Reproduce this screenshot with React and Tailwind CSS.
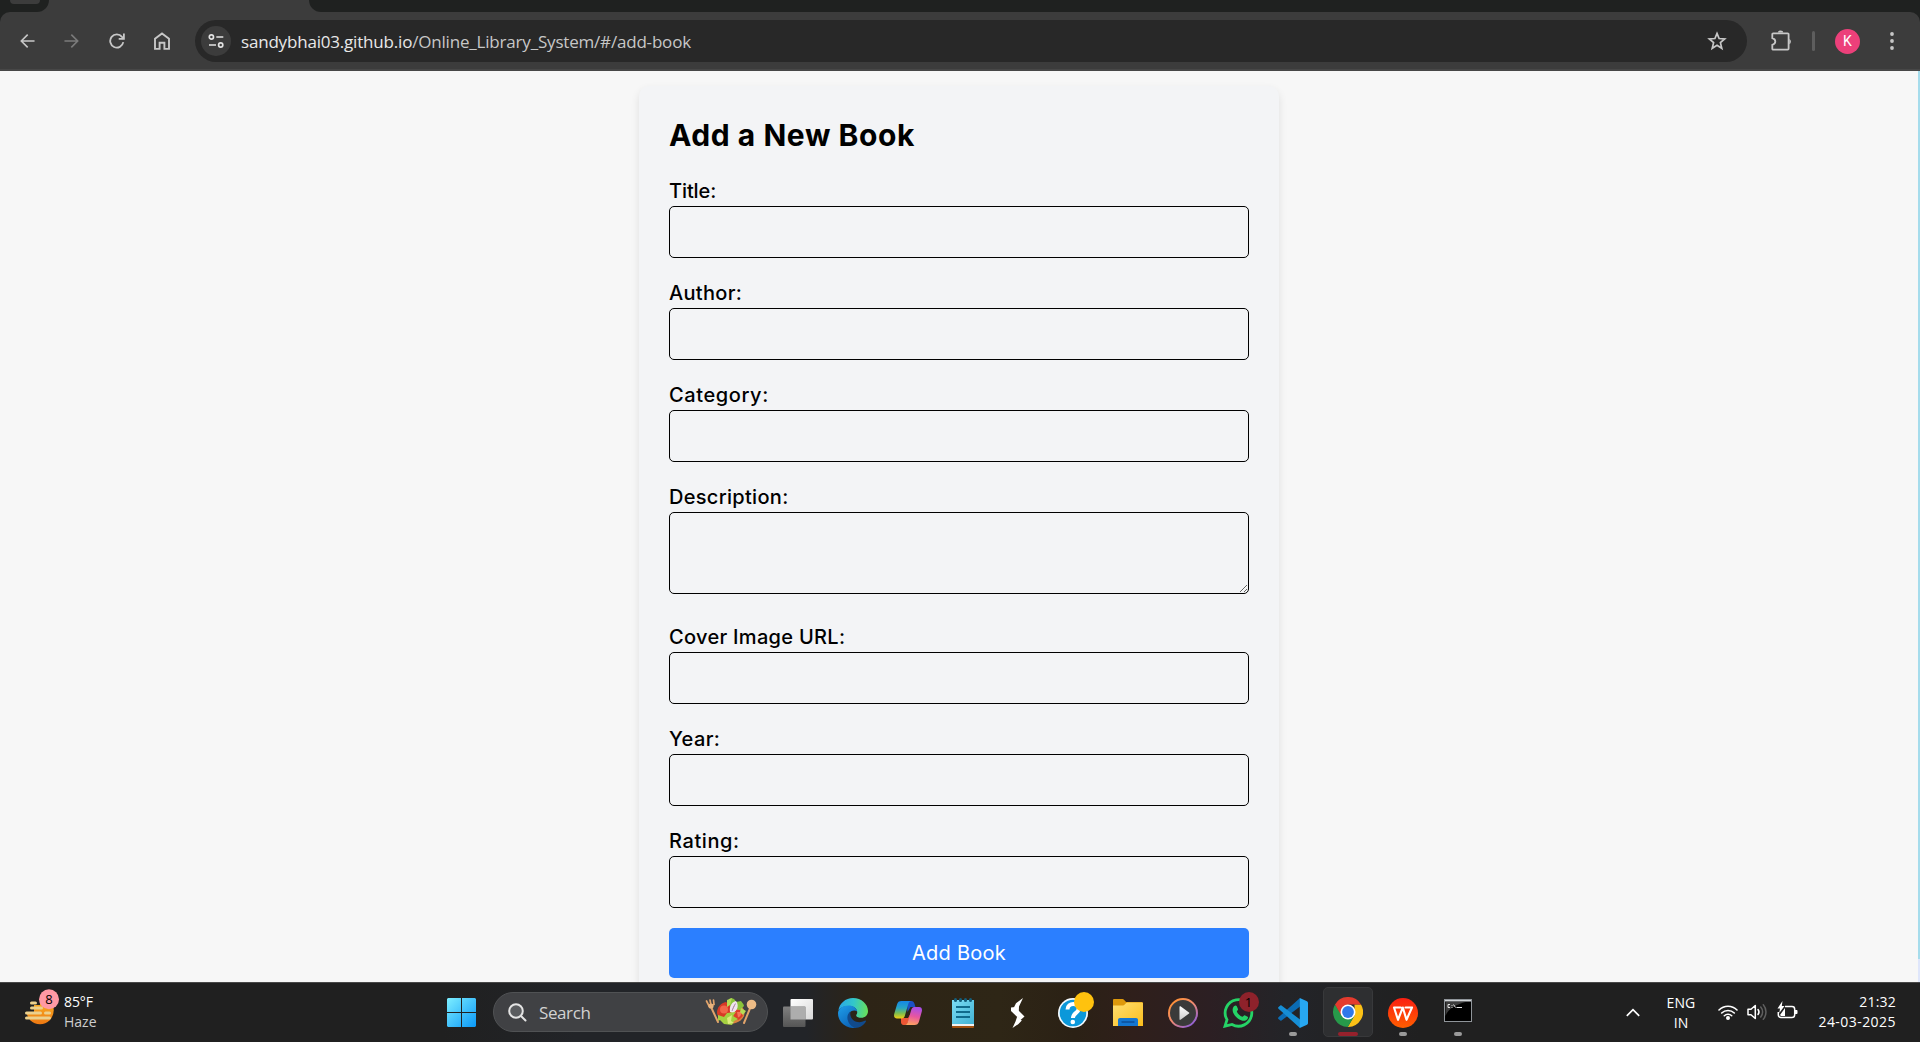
import React from "react";

const ui = "font-['Open_Sans','Noto_Sans',sans-serif]";

function BackIcon({ className }) {
  return (
    <svg viewBox="0 0 16 16" className={className} fill="none" stroke="currentColor" strokeWidth="1.7">
      <path d="M15.5 8H1.6M8.2 1.2 1.4 8l6.8 6.8" />
    </svg>
  );
}

function ReloadIcon() {
  return (
    <svg viewBox="0 0 16 16" className="ml-px h-4 w-4" fill="none" stroke="currentColor" strokeWidth="1.8">
      <path d="M14.300 9.200A6.600 6.600 0 1 1 13 3.900L14.600 5.600" />
      <path d="M14.900.6v5.200H9.700" />
    </svg>
  );
}

function HomeIcon() {
  return (
    <svg viewBox="0 0 16 18" className="h-[18px] w-4" fill="none" stroke="currentColor" strokeWidth="1.9">
      <path d="M1 16.900V6.800L8 1.400l7 5.400v10.100h-4.600v-6.200H5.600v6.200Z" />
    </svg>
  );
}

function TuneIcon() {
  return (
    <svg viewBox="0 0 16 14" className="h-[14px] w-4" fill="none" stroke="#e3e3e3" strokeWidth="1.7">
      <circle cx="3.400" cy="3" r="2.100" />
      <path d="M8.300 3h7M1 11h7" />
      <circle cx="12.700" cy="11" r="2.100" />
    </svg>
  );
}

function StarIcon() {
  return (
    <svg viewBox="0 0 20 20" className="h-5 w-5" fill="none" stroke="currentColor" strokeWidth="1.7">
      <path d="m10 2.400 2.100 5.100 5.600.5-4.300 3.600 1.400 5.700-4.800-3.100-4.800 3.100 1.400-5.700L2.300 8l5.600-.5Z" />
    </svg>
  );
}

function PuzzleIcon() {
  return (
    <svg viewBox="0 0 22 21" className="h-[21px] w-[22px]">
      <path
        d="M3.200 3.300h14.500a.9.9 0 0 1 .9.9v14.500a.9.9 0 0 1-.9.9H3.200a.9.9 0 0 1-.9-.9v-3.900c2-.6 3-1.700 3-3.300S4.300 8.700 2.300 8.100V4.200a.9.9 0 0 1 .9-.9Z"
        fill="none"
        stroke="currentColor"
        strokeWidth="1.8"
      />
      <path d="M7.800 2.600a2.700 2.200 0 0 1 5.400 0ZM19.300 9v5.200a2.200 2.700 0 0 0 0-5.200Z" fill="currentColor" />
    </svg>
  );
}

function BrowserBar() {
  return (
    <header className="shrink-0 bg-[#1f2120]">
      <div className="flex h-3 bg-[#3c3c3c]">
        <div className="flex h-3 w-[49px] justify-center rounded-br-xl bg-[#1f2120]">
          <div className="h-1 w-[30px] rounded-b-[10px] bg-[#3c3c3c]" />
        </div>
        <div className="w-[260px]" />
        <div className="h-3 flex-1 rounded-bl-xl bg-[#1f2120]" />
      </div>
      <div className="flex h-[59px] items-start rounded-t-[10px] border-b-2 border-[#474747] bg-[#3c3c3c] pt-2 text-[#c7c7c7]">
        <div className="flex h-[42px] w-full items-center">
          <div className="ml-5 flex w-[150px] items-center justify-between">
            <BackIcon className="h-4 w-[15px]" />
            <BackIcon className="h-4 w-[15px] rotate-180 text-[#7b7b7b]" />
            <ReloadIcon />
            <HomeIcon />
          </div>
          <div className="ml-[25px] flex h-[42px] w-[1552px] items-center rounded-full bg-[#282828] pr-5 pl-1.5">
            <div className="flex h-[30px] w-[30px] items-center justify-center rounded-full bg-[#3c3c3c]">
              <TuneIcon />
            </div>
            <div className={`mt-0.5 ml-[10px] flex-1 text-[17px] tracking-[-0.19px] whitespace-nowrap ${ui}`}>
              <span className="text-[#e8e8e8]">sandybhai03.github.io</span>
              <span>/Online_Library_System/#/add-book</span>
            </div>
            <StarIcon />
          </div>
          <div className="mb-px ml-[23px]">
            <PuzzleIcon />
          </div>
          <div className="ml-5 h-5 w-[3px] rounded-full bg-[#5e5e5e]" />
          <div className="ml-5 flex h-[25px] w-[25px] items-center justify-center rounded-full bg-[#ec407a] font-[Roboto,sans-serif] text-[14px] text-white">
            K
          </div>
          <svg viewBox="0 0 4 18" className="ml-[30px] h-[18px] w-1" fill="currentColor">
            <circle cx="2" cy="2" r="1.9" />
            <circle cx="2" cy="9" r="1.9" />
            <circle cx="2" cy="16" r="1.9" />
          </svg>
        </div>
      </div>
    </header>
  );
}

function Field({ label, tracking, textarea }) {
  return (
    <label className="mb-5 flow-root">
      <span className={`block h-[30px] text-[20px] leading-[30px] font-medium ${tracking}`}>{label}</span>
      {textarea ? (
        <textarea className="mb-2 block h-[82px] w-full resize-y rounded-[5px] border border-black bg-transparent p-2.5" />
      ) : (
        <input className="block h-[52px] w-full rounded-[5px] border border-black bg-transparent p-2.5" />
      )}
    </label>
  );
}

function AddBookPage() {
  return (
    <main className="flex min-h-0 flex-1 overflow-hidden bg-[#f7f7f7]">
      <div className="flex flex-1 justify-center pt-[15px]">
        <form className="h-[940px] w-[640px] rounded-[10px] bg-[#f3f4f6] px-[30px] pt-[30px] font-[Inter,sans-serif] text-black shadow-[0_4px_8px_rgba(0,0,0,0.1)]">
          <h2 className="mb-[15px] h-[45px] text-[30px] leading-[38px] font-bold tracking-[0.55px] whitespace-nowrap">
            Add a New Book
          </h2>
          <Field label="Title:" tracking="tracking-[-0.1px]" />
          <Field label="Author:" tracking="tracking-[0.3px]" />
          <Field label="Category:" tracking="tracking-[0.6px]" />
          <Field label="Description:" tracking="tracking-[0.3px]" textarea />
          <Field label="Cover Image URL:" tracking="tracking-[0.3px]" />
          <Field label="Year:" tracking="tracking-[0.4px]" />
          <Field label="Rating:" tracking="tracking-[0.6px]" />
          <button
            type="button"
            className="block h-[50px] w-full rounded-[5px] bg-[#2b7fff] text-[20px] tracking-[0.25px] text-white"
          >
            Add Book
          </button>
        </form>
      </div>
      <div className="flex w-0.5 flex-col">
        <div className="h-[888px] bg-[#a6dcec]" />
        <div className="flex-1 bg-[#dfe6fb]" />
      </div>
    </main>
  );
}

function HazeIcon() {
  return (
    <svg viewBox="0 0 34 36" className="h-9 w-[34px]">
      <defs>
        <linearGradient id="sun" x1="0" y1="0" x2="0" y2="1">
          <stop offset="0" stopColor="#fbb924" />
          <stop offset="1" stopColor="#ee7812" />
        </linearGradient>
      </defs>
      <circle cx="15" cy="21.500" r="13.700" fill="url(#sun)" />
      <path d="M0 0h15v16H9v8H0Z" fill="#202020" />
      <g stroke="#ecd08c" strokeWidth="3" strokeLinecap="round">
        <path d="M6.500 14h4M6.500 19h10M1.500 24h14M20.500 24h4M1.500 29h23" />
      </g>
      <circle cx="24" cy="10.200" r="10" fill="#ff99a4" />
    </svg>
  );
}

function WindowsIcon() {
  return (
    <svg viewBox="0 0 29 29" className="h-[29px] w-[29px]">
      <defs>
        <linearGradient id="win" x1="0" y1="0" x2="1" y2="1">
          <stop offset="0" stopColor="#7deeff" />
          <stop offset="1" stopColor="#0a98f8" />
        </linearGradient>
      </defs>
      <path d="M1 0h13v14H0V1ZM15 0h13l1 1v13H15ZM0 15h14v14H1l-1-1ZM15 15h14v13l-1 1H15Z" fill="url(#win)" />
    </svg>
  );
}

function SaladIcon() {
  return (
    <svg viewBox="0 0 52 28" className="h-7 w-[52px]">
      <g stroke="#e0a36b" strokeLinecap="round" fill="none">
        <path d="m6 9 7 15M46 8l-7 17" strokeWidth="2" />
        <path d="m1.500 3 2.500 5 5-1.500L8.500 2M5 2l1 5" strokeWidth="1.700" />
      </g>
      <circle cx="6" cy="8" r="2.600" fill="#e8b27c" />
      <circle cx="46.500" cy="6.500" r="4.800" fill="#edbc86" />
      <ellipse cx="26" cy="15" rx="13.500" ry="10.500" fill="#d9823f" />
      <path d="M24 1c3-2 6 0 7 3l5-1c1 2 3 3 3 5l-4 4-11-3Z" fill="#8ac43a" />
      <path d="M12 15c0-6 4-10 9-11l4 3 1 9-8 5c-3-1-5-3-6-6Z" fill="#d63a26" />
      <circle cx="19" cy="11.500" r="4" fill="#f2674a" />
      <path d="M30 12h9c0 5-2 8-6 10l-5-3Z" fill="#dd3f2a" />
      <path d="M32 14h4.500c0 3-1.500 4.500-3.500 5.500Z" fill="#f47559" />
      <path d="M25 14c-1-6 2-10 6-11 3 4 2 9-3 12Z" fill="#efe4ee" />
      <path d="M27 13c1-3 2-5 3.500-7.500" stroke="#b487ae" strokeWidth="1" />
      <path d="m13 17 6 2 3-4 9-1-3 4 5 3-4 2-2 4-8-1-4-4-2 1Z" fill="#a5d040" />
      <path d="m22 20 5-3-1 6 3 2-6 1Z" fill="#dcea7c" />
      <path d="m36 10 5 3-3 4-3-3ZM22 2l5-2-2 7-3 2Z" fill="#b6dc55" />
    </svg>
  );
}

function TaskViewIcon() {
  return (
    <svg viewBox="0 0 30 30" className="h-[30px] w-[30px]">
      <defs>
        <linearGradient id="tvA" x1="0" y1="0" x2="1" y2="1">
          <stop offset="0" stopColor="#fff" />
          <stop offset="1" stopColor="#d8d8d8" />
        </linearGradient>
        <linearGradient id="tvB" x1="0" y1="0" x2="0" y2="1">
          <stop offset="0" stopColor="#808080" />
          <stop offset="1" stopColor="#555" />
        </linearGradient>
      </defs>
      <rect x="7.500" y="1" width="22.500" height="20.500" rx="1" fill="url(#tvA)" />
      <rect x="0" y="8.500" width="22.500" height="20.500" rx="1" fill="url(#tvB)" />
      <path d="M7.500 8.500h15v13h-15Z" fill="#adadad" />
    </svg>
  );
}

function EdgeIcon() {
  return (
    <svg viewBox="0 0 30 30" className="h-[30px] w-[30px]">
      <defs>
        <linearGradient id="edgeTop" x1="0" y1=".4" x2="1" y2=".5">
          <stop offset="0" stopColor="#2aa7e8" />
          <stop offset=".5" stopColor="#33c7c9" />
          <stop offset="1" stopColor="#67e05a" />
        </linearGradient>
        <linearGradient id="edgeLow" x1="0" y1="0" x2=".6" y2="1">
          <stop offset="0" stopColor="#1f9fea" />
          <stop offset="1" stopColor="#0c63b8" />
        </linearGradient>
      </defs>
      <path d="M.4 12.500C1.300 5.500 7.500 0 15 0c8.600 0 15 6.300 15 12.900 0 4.200-3 6.900-6.700 6.900-3.600 0-5.500-1.500-5-2.800.5-1 1-1.500.9-3C19 10 15 8 10.500 8 6 8 2 9.800.4 12.500Z" fill="url(#edgeTop)" />
      <path d="M0 15C.2 10.500 5 7.500 10.500 7.500c5 0 8.200 2.700 8.700 6C17 11.600 12.500 12.300 11 16c-1.700 4.500 1 11 7 13.700A15 15 0 0 1 0 15Z" fill="url(#edgeLow)" />
      <path d="M12.300 13.500C7.500 17 8.500 26 16.500 29.900c4.500.4 9-2.200 11.300-6.100.5-.9-.2-1.500-1-1-7 3.500-14-.3-14.500-6.300Z" fill="#114a8b" />
    </svg>
  );
}

function CopilotIcon() {
  return (
    <svg viewBox="0 0 28 26" className="h-[26px] w-7">
      <defs>
        <linearGradient id="cpA" x1="0" y1="0" x2="0" y2="1">
          <stop offset="0" stopColor="#1486e8" />
          <stop offset=".4" stopColor="#27a5c5" />
          <stop offset=".7" stopColor="#7bbd50" />
          <stop offset="1" stopColor="#f2cf12" />
        </linearGradient>
        <linearGradient id="cpB" x1=".5" y1="0" x2=".3" y2="1">
          <stop offset="0" stopColor="#a94ee8" />
          <stop offset=".5" stopColor="#e8569f" />
          <stop offset="1" stopColor="#ffa65e" />
        </linearGradient>
      </defs>
      <path d="M13 1h4.500c1.500 0 2.400 1 2.900 2.500L21.500 7h-5l-3 5Z" fill="#1b50c5" />
      <path d="M7 18h7l3-5-3 9c-.6 1.900-1.500 3-3 3H9.500C8 25 7.300 24 7 22.500Z" fill="#ed5634" />
      <path d="M7.500 1H17c-1.500.3-2.300 1.500-2.800 3.200l-3.200 11C10.400 17.500 9.500 18.500 7.500 18.500H3C.5 18.500-.4 16.500.2 14L3 4.500C3.700 2 5 1 7.500 1Z" fill="url(#cpA)" />
      <path d="M20.500 25H11c1.500-.3 2.300-1.500 2.800-3.200l3.200-11C17.600 8.500 18.500 7 20.500 7H25c2.500 0 3.400 2 2.800 4.500L25 21.500C24.300 24 23 25 20.500 25Z" fill="url(#cpB)" />
    </svg>
  );
}

function NotepadIcon() {
  return (
    <svg viewBox="0 0 22 30" className="h-[30px] w-[22px]">
      <defs>
        <linearGradient id="pad" x1="0" y1="0" x2="1" y2="1">
          <stop offset="0" stopColor="#7bdcf4" />
          <stop offset="1" stopColor="#42b2d4" />
        </linearGradient>
      </defs>
      <path d="M0 27h22v2a1 1 0 0 1-1 1H1a1 1 0 0 1-1-1Z" fill="#a3500f" />
      <path d="M0 25h22v3H0Z" fill="#f1f1f1" />
      <path d="M0 2h22v24H0Z" fill="url(#pad)" />
      <path d="M4 9h14M4 14h14M4 19h14" stroke="#106b8c" strokeWidth="1.900" />
      <g fill="#125e7c">
        <rect x="2" width="3" height="4" rx="1.500" />
        <rect x="7" width="3" height="4" rx="1.500" />
        <rect x="12" width="3" height="4" rx="1.500" />
        <rect x="17" width="3" height="4" rx="1.500" />
      </g>
    </svg>
  );
}

function SlashIcon() {
  return (
    <svg viewBox="0 0 14 30" className="h-[30px] w-[14px]" fill="#fff">
      <path d="M12 0 5 5.200 3 9.300l4.800 3.900.2-4.700Z" />
      <path d="M0 9.500 4 9l9.500 9.500-4 3.500L0 13Z" />
      <path d="m1.500 30 3-6.500 1.700-5 4.600 4-3.300 3.500Z" />
    </svg>
  );
}

function HelpIcon() {
  return (
    <svg viewBox="0 0 36 36" className="h-9 w-9">
      <circle cx="15" cy="21" r="15" fill="#f5fbff" />
      <circle cx="15" cy="21" r="13.300" fill="#0b98da" />
      <path d="M9.500 17.500c0-7.500 11.800-7 11.200-.5-.4 4-5.700 4-5.700 9" fill="none" stroke="#fff" strokeWidth="4" />
      <circle cx="14.800" cy="30" r="2.300" fill="#fff" />
      <circle cx="26" cy="10" r="10" fill="#ffc20e" />
    </svg>
  );
}

function FolderIcon() {
  return (
    <svg viewBox="0 0 30 27" className="h-[27px] w-[30px]">
      <defs>
        <linearGradient id="fold" x1="0" y1="0" x2="1" y2="1">
          <stop offset="0" stopColor="#ffdf72" />
          <stop offset="1" stopColor="#fbbd1c" />
        </linearGradient>
      </defs>
      <path d="M0 1.200C0 .5.500 0 1.200 0H9c1 0 1.600.3 2.200 1l1.900 2H28.500c.8 0 1.500.6 1.500 1.400V12H0Z" fill="#dd980c" />
      <path d="M0 6.500h9.500c1 0 1.600-.4 2.200-1l1-1c.6-.7 1-1 2-1H29a1 1 0 0 1 1 1V27H0Z" fill="url(#fold)" />
      <path d="M5 27v-6c0-1.200.9-2 2-2h16c1.200 0 2 .9 2 2v6Z" fill="#1476d1" />
      <path d="M9 23h12" stroke="#0b4f99" strokeWidth="1.300" strokeLinecap="round" />
    </svg>
  );
}

function MediaIcon() {
  return (
    <svg viewBox="0 0 30 30" className="h-[30px] w-[30px]">
      <defs>
        <linearGradient id="ring" x1=".1" y1=".1" x2=".8" y2=".95">
          <stop offset="0" stopColor="#ff9136" />
          <stop offset=".5" stopColor="#ef8a72" />
          <stop offset="1" stopColor="#9060d5" />
        </linearGradient>
        <linearGradient id="play" x1="0" y1="0" x2="0" y2="1">
          <stop offset="0" stopColor="#fff" />
          <stop offset="1" stopColor="#ccc" />
        </linearGradient>
      </defs>
      <circle cx="15" cy="15" r="14" fill="#3a3a3a" stroke="url(#ring)" strokeWidth="2" />
      <path d="M11.500 8.800c0-.6.500-.8 1-.5l8.500 6.200c.4.300.4.800 0 1.100l-8.500 6.200c-.5.300-1 .1-1-.5Z" fill="url(#play)" />
    </svg>
  );
}

function WhatsAppIcon() {
  return (
    <svg viewBox="0 0 36 36" className="h-9 w-9">
      <path d="M2 34.200 4 27.600a13.300 13.300 0 1 1 5 4.900Z" fill="none" stroke="#25d366" strokeWidth="2.800" />
      <path
        d="M11 14.300c1-1.100 2.400-1.100 2.800-.1l1.300 3c.3.700-1.500 1.900-1.200 2.600 1.200 2.400 3 4 5.400 5 .7.300 1.700-1.800 2.400-1.500l2.900 1.400c.7.400.5 1.900-.5 2.800-1.600 1.500-3.700 1.500-6 .7-3.700-1.400-6.600-4.300-8-7.700-.8-2.300-.6-4.600.9-6.200Z"
        fill="#25d366"
      />
      <circle cx="26" cy="10" r="10" fill="#8e222b" />
    </svg>
  );
}

function CodeIcon() {
  return (
    <svg viewBox="0 0 30 30" className="h-[30px] w-[30px]">
      <path d="M22 0v8.500L3.500 22.600c-.4.300-.9.300-1.200 0L.5 21c-.6-.5-.6-1.200 0-1.700Z" fill="#0b6cb4" />
      <path d="M22 30v-8.500L3.500 7.400c-.4-.3-.9-.3-1.200 0L.5 9c-.6.500-.6 1.200 0 1.700Z" fill="#168ed5" />
      <path d="M21.800 0 29 3.300c.6.300 1 .9 1 1.500v20.400c0 .6-.4 1.200-1 1.500L21.800 30Z" fill="#27a8f2" />
    </svg>
  );
}

function ChromeIcon() {
  return (
    <svg viewBox="0 0 30 30" className="h-[30px] w-[30px]">
      <path d="M28 7.500A15 15 0 0 1 14.800 30l6.700-11.500V7.500Z" fill="#fbc116" />
      <path d="M2 7.500A15 15 0 0 0 14.800 30l6.700-11.500-11.500 1.500Z" fill="#27994a" />
      <path d="M2 7.500a15 15 0 0 1 26 0H15l-6.500 11.200Z" fill="#e33b2e" />
      <circle cx="15" cy="15" r="7.500" fill="#fff" />
      <circle cx="15" cy="15" r="5.900" fill="#2f78ea" />
    </svg>
  );
}

function WpsIcon() {
  return (
    <svg viewBox="0 0 30 30" className="h-[30px] w-[30px]">
      <defs>
        <linearGradient id="wps" x1="0" y1="0" x2="0" y2="1">
          <stop offset="0" stopColor="#fb1f12" />
          <stop offset="1" stopColor="#ff5e00" />
        </linearGradient>
      </defs>
      <circle cx="15" cy="15" r="15" fill="url(#wps)" />
      <path
        d="M12.800 9.500H6l4 12.300 4.800-12.300 3.700 12.300 5.500-12.300h-6.500"
        fill="none"
        stroke="#fff"
        strokeWidth="2.100"
        strokeLinejoin="round"
        strokeLinecap="round"
      />
    </svg>
  );
}

function TerminalIcon() {
  return (
    <svg viewBox="0 0 28 23" className="h-[23px] w-7">
      <rect x=".5" y=".5" width="27" height="22" fill="#000" stroke="#8f9499" />
      <path d="M1 1h26v1.500H1Z" fill="#cfd3d6" />
      <path d="M1.500 3h20C14 5 4 9 1.500 17Z" fill="#3c3c3c" />
      <path d="M6 5.500H4v3h2M8 6v.8M8 8v.8M9.500 5.500l2 3M12.500 8.500H18" stroke="#e5e5e5" strokeWidth="1" fill="none" />
    </svg>
  );
}

function TaskCell({ children, running }) {
  return (
    <div className="relative flex h-full w-[55px] shrink-0 items-center justify-center">
      {children}
      {running && <span className="absolute bottom-[6px] h-1 w-2 rounded-full bg-[#9a9a9a]" />}
    </div>
  );
}

function Taskbar() {
  return (
    <footer
      className={`flex h-[60px] shrink-0 border-t border-[#484848] bg-[linear-gradient(90deg,#202020_0%,#202020_23%,#222428_30%,#222428_42%,#2d2416_45%,#2e2616_52%,#2b2115_56%,#2f1f1b_59%,#2c1f23_63%,#232428_67%,#202020_74%)] text-white ${ui}`}
    >
      <div className="flex w-[434px] items-start">
        <div className="relative mt-1.5 ml-[25px]">
          <HazeIcon />
          <span className="absolute top-0 left-[14px] w-5 text-center text-[13px] leading-[21px] text-black">8</span>
        </div>
        <div className="mt-[9px] ml-[5px] text-[14px] leading-5">
          <div className="tracking-[-0.1px]">85°F</div>
          <div className="text-[#cdcdcd]">Haze</div>
        </div>
      </div>
      <div className="flex w-[55px] items-center justify-center">
        <WindowsIcon />
      </div>
      <div className="mt-[9px] ml-1 flex h-10 w-[275px] items-center rounded-full border border-[#505254] bg-[#404144] pr-[10px] pl-3.5">
        <svg viewBox="0 0 19 19" className="h-[19px] w-[19px]" fill="none" stroke="#e4e4e4" strokeWidth="2" strokeLinecap="round">
          <circle cx="8" cy="8" r="6.800" fill="#5a5c5f" />
          <path d="m13 13 4.500 4.500" />
        </svg>
        <span className="mt-0.5 ml-3 flex-1 text-[17px] tracking-[-0.4px] text-[#d2d2d2]">Search</span>
        <SaladIcon />
      </div>
      <div className="ml-[2px] flex h-full">
        <TaskCell><TaskViewIcon /></TaskCell>
        <TaskCell><EdgeIcon /></TaskCell>
        <TaskCell><CopilotIcon /></TaskCell>
        <TaskCell><NotepadIcon /></TaskCell>
        <TaskCell><SlashIcon /></TaskCell>
        <TaskCell>
          <div className="mb-1.5 ml-[6px]"><HelpIcon /></div>
        </TaskCell>
        <TaskCell><FolderIcon /></TaskCell>
        <TaskCell><MediaIcon /></TaskCell>
        <TaskCell>
          <div className="relative mb-1.5 ml-[6px]">
            <WhatsAppIcon />
            <span className="absolute top-0 right-0 w-5 text-center text-[13px] leading-5 text-black">1</span>
          </div>
        </TaskCell>
        <TaskCell running><CodeIcon /></TaskCell>
        <div className="mt-1 mr-[2px] ml-[3px] flex h-[50px] w-[50px] flex-col items-center rounded-[5px] border border-[#38393b] bg-[#2e2f31] pt-[9px]">
          <ChromeIcon />
          <span className="mt-[5px] h-1 w-5 rounded-full bg-[#96212c]" />
        </div>
        <TaskCell running><WpsIcon /></TaskCell>
        <TaskCell running><div className="mb-1"><TerminalIcon /></div></TaskCell>
      </div>
      <div className="mr-[24px] ml-auto flex h-full items-center text-[14px] leading-5">
        <svg viewBox="0 0 14 9" className="h-[9px] w-[14px]" fill="none" stroke="#fff" strokeWidth="1.700">
          <path d="m.8 7.800 6.200-6.200 6.200 6.200" />
        </svg>
        <div className="ml-[24px] w-[34px] text-center">
          <div className="tracking-[0.1px]">ENG</div>
          <div>IN</div>
        </div>
        <svg viewBox="0 0 20 16" className="mb-0.5 ml-5 h-4 w-5" fill="none" stroke="#fff" strokeWidth="1.600" strokeLinecap="round">
          <path d="M1 6a12.700 12.700 0 0 1 18 0M3.700 9a9 9 0 0 1 12.600 0M6.300 11.700a5.300 5.300 0 0 1 7.400 0" />
          <circle cx="10" cy="14" r="1.200" fill="#fff" />
        </svg>
        <svg viewBox="0 0 20 18" className="mb-0.5 ml-[9px] h-[18px] w-5" fill="none" stroke="#fff" strokeWidth="1.500" strokeLinecap="round" strokeLinejoin="round">
          <path d="M1 6.300h3L8.300 2.500v13L4 11.700H1Z" />
          <path d="M11 6.500a4 4 0 0 1 0 5" />
          <path d="M13.700 4a7.500 7.500 0 0 1 0 10M16.300 1.800a11 11 0 0 1 0 14.400" stroke="#606060" />
        </svg>
        <svg viewBox="0 0 21 18" className="mb-[5px] ml-[10px] h-[18px] w-[21px]">
          <path d="M8 5.500h7c1.600 0 2.700 1 2.700 2.700v5.600c0 1.700-1.100 2.700-2.700 2.700H4c-1.600 0-2.700-1-2.700-2.700V11" fill="none" stroke="#fff" strokeWidth="1.500" />
          <path d="M18 9h1.300c.8 0 1.200.4 1.200 1v2c0 .7-.4 1-1.200 1H18ZM5.500 0 .5 7.500H3L2.300 12 7.500 5H4.800ZM3 14l5-7v8H4Z" fill="#fff" />
        </svg>
        <div className="-mt-[2px] ml-[20px] w-[78px] text-right">
          <div className="tracking-[0.2px]">21:32</div>
          <div className="tracking-[0.45px] whitespace-nowrap">24-03-2025</div>
        </div>
      </div>
    </footer>
  );
}

export default function App() {
  return (
    <div className="flex h-[1042px] w-full flex-col overflow-hidden">
      <BrowserBar />
      <AddBookPage />
      <Taskbar />
    </div>
  );
}
